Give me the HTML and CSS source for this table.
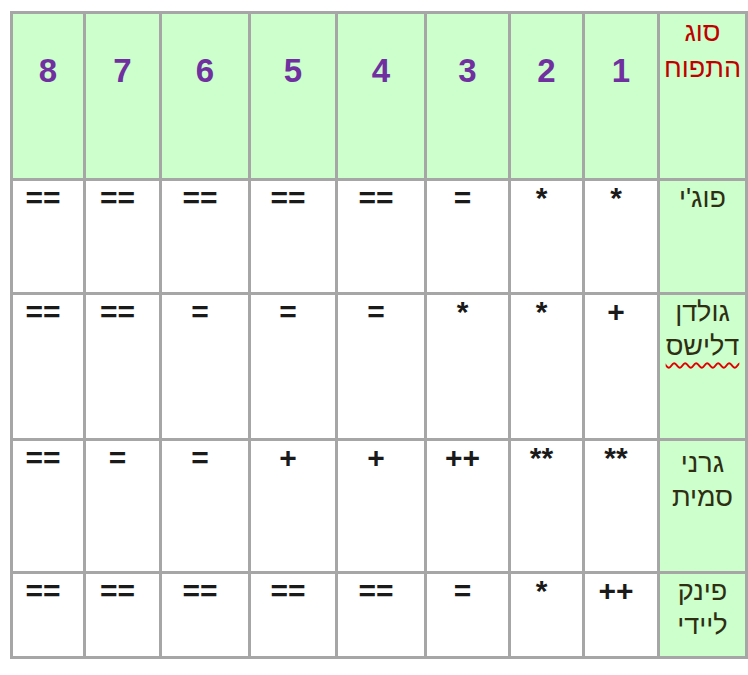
FILE: index.html
```html
<!DOCTYPE html>
<html lang="he" dir="rtl">
<head>
<meta charset="utf-8">
<title>סוג התפוח</title>
<link rel="stylesheet" href="styles.css">
</head>
<body>
<div class="grid">
  <div class="cell head label-head">סוג<br>התפוח</div>
  <div class="cell head num">1</div>
  <div class="cell head num">2</div>
  <div class="cell head num">3</div>
  <div class="cell head num">4</div>
  <div class="cell head num">5</div>
  <div class="cell head num">6</div>
  <div class="cell head num">7</div>
  <div class="cell head num">8</div>

  <div class="cell label">פוג'י</div>
  <div class="cell val">*</div>
  <div class="cell val">*</div>
  <div class="cell val">=</div>
  <div class="cell val">==</div>
  <div class="cell val">==</div>
  <div class="cell val">==</div>
  <div class="cell val">==</div>
  <div class="cell val">==</div>

  <div class="cell label">גולדן<br><span class="spell">דלישס</span></div>
  <div class="cell val">+</div>
  <div class="cell val">*</div>
  <div class="cell val">*</div>
  <div class="cell val">=</div>
  <div class="cell val">=</div>
  <div class="cell val">=</div>
  <div class="cell val">==</div>
  <div class="cell val">==</div>

  <div class="cell label label-low">גרני<br>סמית</div>
  <div class="cell val">**</div>
  <div class="cell val">**</div>
  <div class="cell val">++</div>
  <div class="cell val">+</div>
  <div class="cell val">+</div>
  <div class="cell val">=</div>
  <div class="cell val">=</div>
  <div class="cell val">==</div>

  <div class="cell label">פינק<br>ליידי</div>
  <div class="cell val">++</div>
  <div class="cell val">*</div>
  <div class="cell val">=</div>
  <div class="cell val">==</div>
  <div class="cell val">==</div>
  <div class="cell val">==</div>
  <div class="cell val">==</div>
  <div class="cell val">==</div>
</div>
</body>
</html>
```

FILE: styles.css
```css
html, body {
  margin: 0;
  padding: 0;
  background: #ffffff;
}

body {
  font-family: "Liberation Sans", Arial, sans-serif;
}

.grid {
  direction: rtl;
  display: grid;
  grid-template-columns: 85px 72px 71px 81px 86px 84px 86px 73px 70px;
  grid-template-rows: 164px 111px 143px 130px 82px;
  gap: 3px;
  padding: 3px;
  background: #a6a6a6;
  width: 738px;
  box-sizing: border-box;
  margin: 11px 0 0 9px;
}

.cell {
  background: #ffffff;
  text-align: center;
  overflow: hidden;
}

.head {
  background: #ccffcc;
}

.label-head {
  color: #c00000;
  font-size: 27px;
  line-height: 36px;
  padding-top: 0;
}

.num {
  color: #7030a0;
  font-weight: bold;
  font-size: 33px;
  line-height: 36px;
  padding-top: 39px;
}

.label {
  background: #ccffcc;
  color: #2e2e12;
  font-size: 27px;
  line-height: 34px;
  padding-top: 0;
}

.label-low {
  padding-top: 5px;
}

.spell {
  text-decoration: underline wavy #e00000;
  text-decoration-thickness: 2px;
  text-underline-offset: 7px;
}

.val {
  color: #1a1a1a;
  font-weight: bold;
  font-size: 30px;
  line-height: 34px;
  padding-right: 10px;
}
```
